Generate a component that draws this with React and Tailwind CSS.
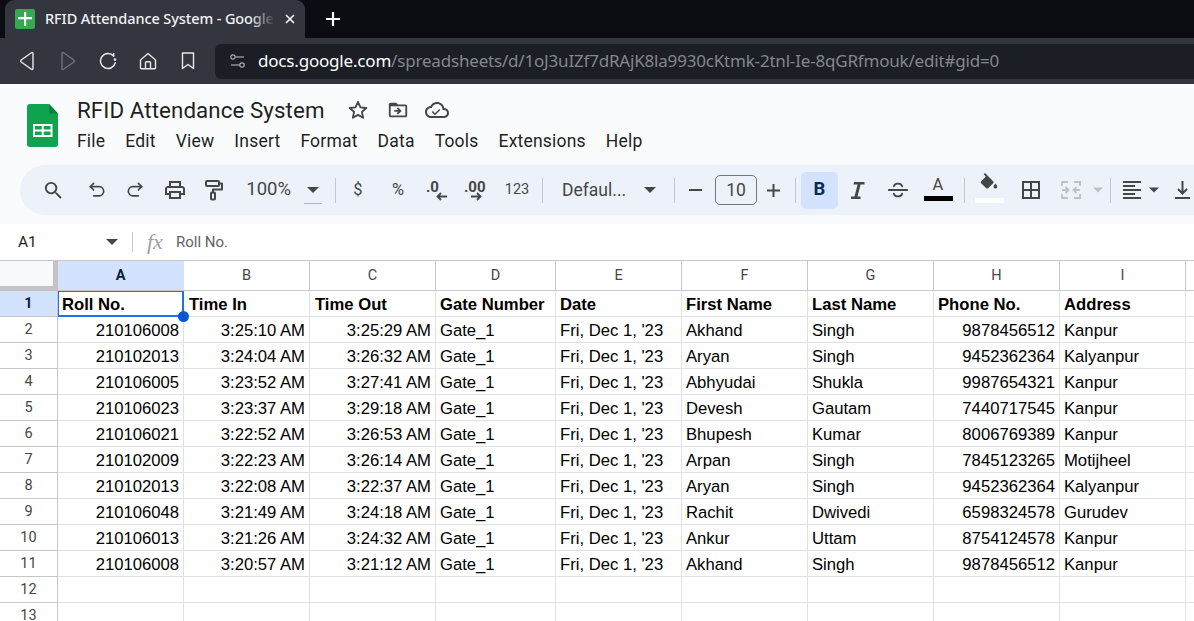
const DATA = [
  ["210106008","3:25:10 AM","3:25:29 AM","Gate_1","Fri, Dec 1, '23","Akhand","Singh","9878456512","Kanpur"],
  ["210102013","3:24:04 AM","3:26:32 AM","Gate_1","Fri, Dec 1, '23","Aryan","Singh","9452362364","Kalyanpur"],
  ["210106005","3:23:52 AM","3:27:41 AM","Gate_1","Fri, Dec 1, '23","Abhyudai","Shukla","9987654321","Kanpur"],
  ["210106023","3:23:37 AM","3:29:18 AM","Gate_1","Fri, Dec 1, '23","Devesh","Gautam","7440717545","Kanpur"],
  ["210106021","3:22:52 AM","3:26:53 AM","Gate_1","Fri, Dec 1, '23","Bhupesh","Kumar","8006769389","Kanpur"],
  ["210102009","3:22:23 AM","3:26:14 AM","Gate_1","Fri, Dec 1, '23","Arpan","Singh","7845123265","Motijheel"],
  ["210102013","3:22:08 AM","3:22:37 AM","Gate_1","Fri, Dec 1, '23","Aryan","Singh","9452362364","Kalyanpur"],
  ["210106048","3:21:49 AM","3:24:18 AM","Gate_1","Fri, Dec 1, '23","Rachit","Dwivedi","6598324578","Gurudev"],
  ["210106013","3:21:26 AM","3:24:32 AM","Gate_1","Fri, Dec 1, '23","Ankur","Uttam","8754124578","Kanpur"],
  ["210106008","3:20:57 AM","3:21:12 AM","Gate_1","Fri, Dec 1, '23","Akhand","Singh","9878456512","Kanpur"],
];
const HEAD = ["Roll No.","Time In","Time Out","Gate Number","Date","First Name","Last Name","Phone No.","Address"];
const WIDTHS = ["w-[126px]","w-[126px]","w-[126px]","w-[120px]","w-[126px]","w-[126px]","w-[126px]","w-[126px]","w-[126px]"];
const PADS = ["pl-[4px] pr-[4px]","pl-[5px] pr-[4px]","pl-[5px] pr-[4px]","pl-[4px] pr-[4px]","pl-[4px] pr-[4px]","pl-[4px] pr-[4px]","pl-[4px] pr-[4px]","pl-[4px] pr-[4px]","pl-[4px] pr-[4px]"];
const LETTERS = ["A","B","C","D","E","F","G","H","I"];
const RIGHT = [true,true,true,false,false,false,false,true,false];

const Ic = ({ size = 22, children, className = "", fill = "none", sw = 2, color = "#444746" }) => (
  <svg width={size} height={size} viewBox="0 0 24 24" fill={fill} stroke={fill === "none" ? color : "none"} strokeWidth={sw} strokeLinecap="round" strokeLinejoin="round" className={className}>{children}</svg>
);
const Solid = ({ size = 22, d, color = "#444746" }) => (
  <svg width={size} height={size} viewBox="0 0 24 24" fill={color}><path d={d} /></svg>
);
const Slot = ({ w, children, className = "" }) => (
  <div className={`${w} h-full shrink-0 flex items-center justify-center ${className}`}>{children}</div>
);
const Sep = ({ ml = "" }) => <div className={`w-px h-[25px] bg-[#c7c7c7] shrink-0 ${ml}`} />;
const Caret = ({ color = "#444746" }) => (
  <svg width="12" height="6" viewBox="0 0 12 6" fill={color}><path d="M0 0h12L6 6z" /></svg>
);

function Tab() {
  return (
    <div className="h-[38px] bg-[#0b0b12] flex items-end pl-[5px]">
      <div className="w-[300px] h-[38px] bg-[#33363f] rounded-t-[9px] flex items-center pl-[10px] relative shrink-0">
        <div className="w-5 h-5 rounded-[2px] bg-[#34a853] flex items-center justify-center shrink-0">
          <svg width="14" height="14" viewBox="0 0 14 14" fill="#fff"><path d="M6 0h2.200v5H14v2.200H8.200V14H6V7.200H0V5h6z" /></svg>
        </div>
        <span className="ml-[10px] mt-[-2px] w-[230px] overflow-hidden whitespace-nowrap text-[14.500px] leading-[20px] tracking-[-0.1px] font-medium text-[#f1f1f3] font-['Noto_Sans','Open_Sans',sans-serif]">RFID Attendance System - Google Sheets</span>
        <div className="absolute left-[245px] top-0 w-[25px] h-full bg-gradient-to-r from-transparent to-[#33363f]" />
        <svg className="absolute left-[280px] top-[14px]" width="10" height="10" viewBox="0 0 10 10" stroke="#fff" strokeWidth="1.600"><path d="M1 1l8 8M9 1l-8 8" /></svg>
      </div>
      <div className="h-[38px] ml-[20px] flex items-center">
        <svg width="16" height="16" viewBox="0 0 16 16" stroke="#fff" strokeWidth="2.200"><path d="M8 1v14M1 8h14" /></svg>
      </div>
    </div>
  );
}

function AddressRow() {
  return (
    <div className="h-[46px] bg-[#33363f] flex items-center">
      <div className="w-[215px] h-full flex items-center shrink-0">
        <div className="w-[54px] flex justify-center">
          <svg width="16" height="20" viewBox="0 0 16 20" fill="none" stroke="#e8e8ea" strokeWidth="1.400" strokeLinejoin="round"><path d="M14 2.500v15a1 1 0 0 1-1.600.8L2.200 11a1.200 1.200 0 0 1 0-2l10.200-7.300A1 1 0 0 1 14 2.500z" /></svg>
        </div>
        <div className="w-[27px] flex justify-center">
          <svg width="16" height="20" viewBox="0 0 16 20" fill="none" stroke="#70737b" strokeWidth="1.400" strokeLinejoin="round"><path d="M2 2.500v15a1 1 0 0 0 1.600.8L13.800 11a1.200 1.200 0 0 0 0-2L3.600 1.700A1 1 0 0 0 2 2.500z" /></svg>
        </div>
        <div className="w-[53px] flex justify-center">
          <svg width="18" height="18" viewBox="0 0 18 18" fill="none" stroke="#e8e8ea" strokeWidth="1.500" strokeLinecap="round"><path d="M14.600 4A7.500 7.500 0 1 0 16.300 10.800" /><path d="M14.600 4V1.600" /><circle cx="16" cy="7.600" r="1.300" fill="#e8e8ea" stroke="none" /></svg>
        </div>
        <div className="w-[27px] flex justify-center">
          <svg width="18" height="18" viewBox="0 0 18 18" fill="none" stroke="#e8e8ea" strokeWidth="1.400" strokeLinejoin="round"><path d="M1.500 8 9 1.500 16.500 8v8a.8.8 0 0 1-.8.8H2.300a.8.8 0 0 1-.8-.8z" /><path d="M6.500 16.800V10.500a.8.8 0 0 1 .8-.8h3.400a.8.8 0 0 1 .8.8v6.300" /></svg>
        </div>
        <div className="w-[53px] flex justify-center">
          <svg width="14" height="18" viewBox="0 0 14 18" fill="none" stroke="#e8e8ea" strokeWidth="1.400" strokeLinejoin="round"><path d="M1.500 1h11v15.500L7 12.500 1.500 16.500z" /></svg>
        </div>
      </div>
      <div className="flex-1 h-[35px] bg-[#1b1e25] rounded-l-[6px] flex items-center pl-[15px] min-w-0">
        <svg width="15" height="14" viewBox="0 0 15 14" fill="none" stroke="#a9abb0" strokeWidth="1.200" className="shrink-0"><circle cx="3" cy="3" r="2.200" /><path d="M5.500 3H14" /><circle cx="12" cy="11" r="2.200" /><path d="M1 11h8.500" /></svg>
        <div className="ml-[13px] whitespace-nowrap text-[17px] tracking-[-0.19px] font-['Noto_Sans','Open_Sans',sans-serif]">
          <span className="text-white">docs.google.com</span>
          <span className="text-[#84878e]">/spreadsheets/d/1oJ3uIZf7dRAjK8la9930cKtmk-2tnl-Ie-8qGRfmouk/edit#gid=0</span>
        </div>
      </div>
    </div>
  );
}

function DocsHeader() {
  return (
    <div className="h-[81px] bg-[#f9fbfd] flex pt-[12px] text-[#1f1f1f] pl-[27px]">
      <svg width="31" height="43" viewBox="0 0 31 43" className="shrink-0 mt-[8px]">
        <path d="M3 0h19l9 9.500V40a3 3 0 0 1-3 3H3a3 3 0 0 1-3-3V3a3 3 0 0 1 3-3z" fill="#0fa34f" />
        <path d="M22 0l9 9.500h-7a2 2 0 0 1-2-2z" fill="#0a7f3d" />
        <path d="M6 20h19.500v13H6zM8 22v3.500h6.750V22zm8.750 0v3.500H23.500V22zM8 27.500V31h6.750v-3.500zm8.750 0V31H23.500v-3.500z" fill="#fff" fillRule="evenodd" />
      </svg>
      <div className="ml-[19px] flex flex-col">
        <div className="flex items-center h-[28px]">
          <span className="text-[22.300px] leading-[28px] whitespace-nowrap font-['Roboto',sans-serif] w-[270px] tracking-[0.1px]">RFID Attendance System</span>
          <svg width="22" height="22" viewBox="0 0 24 24" fill="none" stroke="#444746" strokeWidth="2" strokeLinejoin="round"><path d="M12 3.200l2.700 5.900 6.400.7-4.800 4.300 1.300 6.400-5.600-3.200-5.600 3.200 1.300-6.400-4.800-4.300 6.400-.7z" /></svg>
          <div className="ml-[18px]"><svg width="22" height="22" viewBox="0 0 24 24" fill="#444746"><path d="M20 6h-8l-2-2H4c-1.100 0-2 .9-2 2v12c0 1.100.9 2 2 2h16c1.100 0 2-.9 2-2V8c0-1.100-.9-2-2-2zm0 12H4V8h16v10zm-8.010-9l-1.410 1.410L12.160 12H8v2h4.160l-1.590 1.590L11.990 17 16 13.010 11.990 9z" fillRule="evenodd" /></svg></div>
          <div className="ml-[16px]"><svg width="24" height="24" viewBox="0 0 24 24" fill="#444746"><path d="M19.350 10.040C18.670 6.590 15.640 4 12 4 9.110 4 6.600 5.640 5.350 8.040 2.340 8.360 0 10.910 0 14c0 3.310 2.690 6 6 6h13c2.760 0 5-2.240 5-5 0-2.640-2.050-4.780-4.650-4.960zM19 18H6c-2.210 0-4-1.790-4-4s1.790-4 4-4h.710C7.370 7.690 9.480 6 12 6c3.040 0 5.500 2.460 5.500 5.500v.5H19c1.660 0 3 1.340 3 3s-1.340 3-3 3z" /><path d="M10 15.170 7.830 13l-1.060 1.060L10 17.300l5.300-5.300-1.060-1.060z" /></svg></div>
        </div>
        <div className="flex gap-[20px] mt-[4px] text-[17.500px] leading-[26px] font-['Roboto',sans-serif] tracking-[0.2px] whitespace-nowrap">
          {["File","Edit","View","Insert","Format","Data","Tools","Extensions","Help"].map(m => <span key={m}>{m}</span>)}
        </div>
      </div>
    </div>
  );
}

function Toolbar() {
  const t = "text-[#444746] font-['Roboto',sans-serif]";
  return (
    <div className="bg-[#f9fbfd] pl-[20px] h-[59px] pb-[9px] font-['Roboto',sans-serif]">
      <div className="h-[50px] bg-[#edf2fa] rounded-l-[25px] pl-[13px] flex items-center overflow-hidden">
        <Slot w="w-[40px]"><Solid size={23} d="M15.500 14h-.790l-.280-.270A6.471 6.471 0 0 0 16 9.500 6.500 6.500 0 1 0 9.500 16c1.610 0 3.090-.590 4.230-1.570l.270.280v.790l5 4.990L20.490 19l-4.990-5zm-6 0C7.010 14 5 11.990 5 9.500S7.010 5 9.500 5 14 7.010 14 9.500 11.990 14 9.500 14z" /></Slot>
        <Slot w="w-[48px]"><Ic size={20}><path d="M8 4 4 8l4 4" /><path d="M4 8h10.500a5.500 5.500 0 0 1 0 11H8" /></Ic></Slot>
        <Slot w="w-[28px]"><Ic size={20}><path d="M16 4l4 4-4 4" /><path d="M20 8H9.500a5.500 5.500 0 0 0 0 11H16" /></Ic></Slot>
        <Slot w="w-[52px]"><Solid size={24} d="M19 8h-1V3H6v5H5c-1.660 0-3 1.340-3 3v6h4v4h12v-4h4v-6c0-1.660-1.340-3-3-3zM8 5h8v3H8V5zm8 12v2H8v-4h8v2zm2-2v-2H6v2H4v-4c0-.550.450-1 1-1h14c.550 0 1 .450 1 1v4h-2z" /></Slot>
        <Slot w="w-[24px]"><Ic size={24}><rect x="5" y="3" width="13" height="5" rx="1" /><path d="M18 5.500h3v6h-9v3" /><rect x="10" y="14.500" width="4" height="7" rx="1" /></Ic></Slot>
        <Slot w="w-[66px]" className={`justify-end text-[18.500px] ${t}`}>100%</Slot>
        <Slot w="w-[44px]" className="relative"><Caret /><div className="absolute left-[13px] top-[38px] w-[18px] h-px bg-[#b0b3b8]" /></Slot>
        <Sep />
        <Slot w="w-[44px]" className={`text-[16.500px] ${t}`}>$</Slot>
        <Slot w="w-[36px]" className={`text-[16.500px] ${t}`}>%</Slot>
        <Slot w="w-[42px]" className={`relative ${t} text-[15px] font-bold`}>
          <span className="absolute left-[10px] top-[11px]">.0</span>
          <svg className="absolute left-[20px] top-[27px]" width="12" height="9" viewBox="0 0 12 9" fill="none" stroke="#444746" strokeWidth="1.800"><path d="M11 4.500H2M5 1 1.500 4.500 5 8" /></svg>
        </Slot>
        <Slot w="w-[38px]" className={`relative ${t} text-[15px] font-bold`}>
          <span className="absolute left-[6px] top-[11px]">.00</span>
          <svg className="absolute left-[12px] top-[27px]" width="12" height="9" viewBox="0 0 12 9" fill="none" stroke="#444746" strokeWidth="1.800"><path d="M1 4.500h9M7 1l3.500 3.500L7 8" /></svg>
        </Slot>
        <Slot w="w-[42px]" className={`text-[14.500px] ${t}`}>123</Slot>
        <Sep ml="ml-[4px]" />
        <Slot w="w-[86px]" className={`justify-start pl-[19px] text-[17.500px] whitespace-nowrap ${t}`}>Defaul...</Slot>
        <Slot w="w-[42px]"><Caret /></Slot>
        <Sep ml="ml-[3px]" />
        <Slot w="w-[40px]"><svg width="13" height="2" viewBox="0 0 13 2" fill="#444746"><path d="M0 0h13v2H0z" /></svg></Slot>
        <div className={`w-[42px] h-[30px] shrink-0 border border-[#747775] rounded-[5px] flex items-center justify-center text-[17.500px] ${t}`}>10</div>
        <Slot w="w-[32px]"><svg width="13" height="13" viewBox="0 0 13 13" fill="#444746"><path d="M5.500 0h2v5.500H13v2H7.500V13h-2V7.500H0v-2h5.500z" /></svg></Slot>
        <Sep ml="ml-[6px]" />
        <div className="w-[37px] h-[37px] ml-[5px] shrink-0 rounded-[5px] bg-[#d3e3fd] flex items-center justify-center text-[#0b2a5c] font-bold text-[18.500px]">B</div>
        <Slot w="w-[40px]"><svg width="14" height="17" viewBox="0 0 14 17" fill="#444746"><path d="M3.500 0H14v2.500h-3.900L7 14.500h3V17H0v-2.500h4L7.100 2.500H3z" transform="translate(-.5 0)" /></svg></Slot>
        <Slot w="w-[40px]"><Ic size={22} sw={2}><path d="M2 12h20" /><path d="M16.500 8a4.500 3.800 0 0 0-4.500-3 4.500 3.800 0 0 0-4.500 3" /><path d="M7.500 16a4.500 3.800 0 0 0 4.500 3 4.500 3.800 0 0 0 4.500-3" /></Ic></Slot>
        <Slot w="w-[40px]" className="flex-col">
          <span className={`text-[16.500px] leading-[17px] ${t} mt-[-3px]`}>A</span>
          <div className="w-[29px] h-[5px] bg-black mt-[3px]" />
        </Slot>
        <Sep ml="ml-[6px]" />
        <Slot w="w-[48px]" className="flex-col">
          <div className="mt-[-4px] h-[21px]"><Solid size={22} d="M16.560 8.940 7.620 0 6.210 1.410l2.380 2.380-5.150 5.150c-.590.590-.590 1.540 0 2.120l5.500 5.500c.290.290.680.440 1.060.440s.770-.150 1.060-.440l5.500-5.500c.590-.580.590-1.530 0-2.120zM19 11.500s-2 2.170-2 3.500c0 1.100.900 2 2 2s2-.900 2-2c0-1.330-2-3.500-2-3.500z" /></div>
          <div className="w-[29px] h-[5px] bg-white mt-[4px]" />
        </Slot>
        <Slot w="w-[36px]"><svg width="18" height="18" viewBox="0 0 18 18" fill="none" stroke="#444746" strokeWidth="2"><path d="M1 1h16v16H1zM9 1v16M1 9h16" /></svg></Slot>
        <Slot w="w-[44px]"><svg width="20" height="18" viewBox="0 0 20 18" fill="none" stroke="#bdc1c6" strokeWidth="1.800"><path d="M7 1H1v4M1 13v4h6M13 1h6v4M19 13v4h-6" /><path d="M1 9h6M4.500 6 7.500 9l-3 3M19 9h-6M15.500 6l-3 3 3 3" /></svg></Slot>
        <Slot w="w-[10px]"><Caret color="#bdc1c6" /></Slot>
        <Sep ml="ml-[7px]" />
        <Slot w="w-[38px]" className="justify-start pl-[12px]"><svg width="18" height="18" viewBox="0 0 18 18" fill="#444746"><path d="M0 0h18v2H0zM0 4h12v2H0zM0 8h18v2H0zM0 12h12v2H0zM0 16h18v2H0z" /></svg></Slot>
        <Slot w="w-[10px]"><Caret /></Slot>
        <Slot w="w-[46px]"><svg width="15" height="18" viewBox="0 0 15 18" fill="none" stroke="#444746" strokeWidth="2"><path d="M7.500 0v12M3 8l4.500 4.500L12 8M0 17h15" /></svg></Slot>
      </div>
    </div>
  );
}

function FormulaBar() {
  return (
    <div className="h-[36px] bg-white flex items-center font-['Roboto',sans-serif]">
      <span className="ml-[18px] mt-[2px] w-[88px] text-[15.500px] text-[#1f1f1f]">A1</span>
      <Caret />
      <div className="ml-[14px] w-px h-[20px] bg-[#c7c7c7]" />
      <span className="ml-[14px] w-[29px] text-[22px] leading-[24px] italic font-['Liberation_Serif',serif] text-[#9aa0a6]">fx</span>
      <span className="text-[15px] text-[#5f6368]">Roll No.</span>
    </div>
  );
}

function Sheet() {
  return (
    <div className="font-['Liberation_Sans',sans-serif] text-[16.670px] text-black border-t border-[#c7c7c7] bg-white">
      <div className="flex h-[30px]">
        <div className="w-[58px] shrink-0 bg-[#f8f9fa] border-r-[5px] border-b-[5px] border-[#c4c4c4]" />
        {LETTERS.map((l, i) => (
          <div key={l} className={`${WIDTHS[i]} shrink-0 flex items-center justify-center text-[14.500px] font-['Roboto',sans-serif] border-r border-b border-[#c7c7c7] ${i === 0 ? "bg-[#d3e3fd] font-bold text-[#0b1f3f] border-r-[#d3e3fd] border-b-[#c7c7c7]" : "text-[#444746]"}`}>{l}</div>
        ))}
        <div className="flex-1 border-b border-[#c7c7c7]" />
      </div>
      <Row label="1" selected cells={HEAD} bold />
      {DATA.map((r, i) => <Row key={i} label={String(i + 2)} cells={r} />)}
      <Row label="12" cells={Array(9).fill("")} />
      <Row label="13" cells={Array(9).fill("")} />
    </div>
  );
}

function Row({ label, cells, bold, selected }) {
  return (
    <div className="flex h-[26px]">
      <div className={`w-[58px] shrink-0 pt-[1px] flex items-center justify-center text-[14.500px] font-['Roboto',sans-serif] border-r border-b border-[#c7c7c7] ${selected ? "bg-[#d3e3fd] font-bold text-[#0b1f3f]" : "text-[#444746]"}`}>{label}</div>
      {cells.map((c, i) => (
        <div key={i} className={`${WIDTHS[i]} ${PADS[i]} pt-[2px] shrink-0 flex items-center whitespace-nowrap border-r border-b border-[#e1e1e1] ${!bold && RIGHT[i] ? "justify-end" : ""} ${bold ? "font-bold" : ""} ${selected && i === 0 ? "relative" : ""}`}>
          {c}
          {selected && i === 0 && (
            <>
              <div className="absolute left-0 top-0 right-[-1px] bottom-[-1px] border-t border-l border-r-2 border-b-2 border-[#1a73e8] pointer-events-none" />
              <div className="absolute right-[-6px] bottom-[-6px] w-[11px] h-[11px] rounded-full bg-[#0b57d0] z-10" />
            </>
          )}
        </div>
      ))}
      <div className="flex-1 border-b border-[#e1e1e1]" />
    </div>
  );
}

export default function App() {
  return (
    <div className="w-[1194px] h-[621px] overflow-hidden bg-white">
      <Tab />
      <AddressRow />
      <DocsHeader />
      <Toolbar />
      <FormulaBar />
      <Sheet />
    </div>
  );
}
